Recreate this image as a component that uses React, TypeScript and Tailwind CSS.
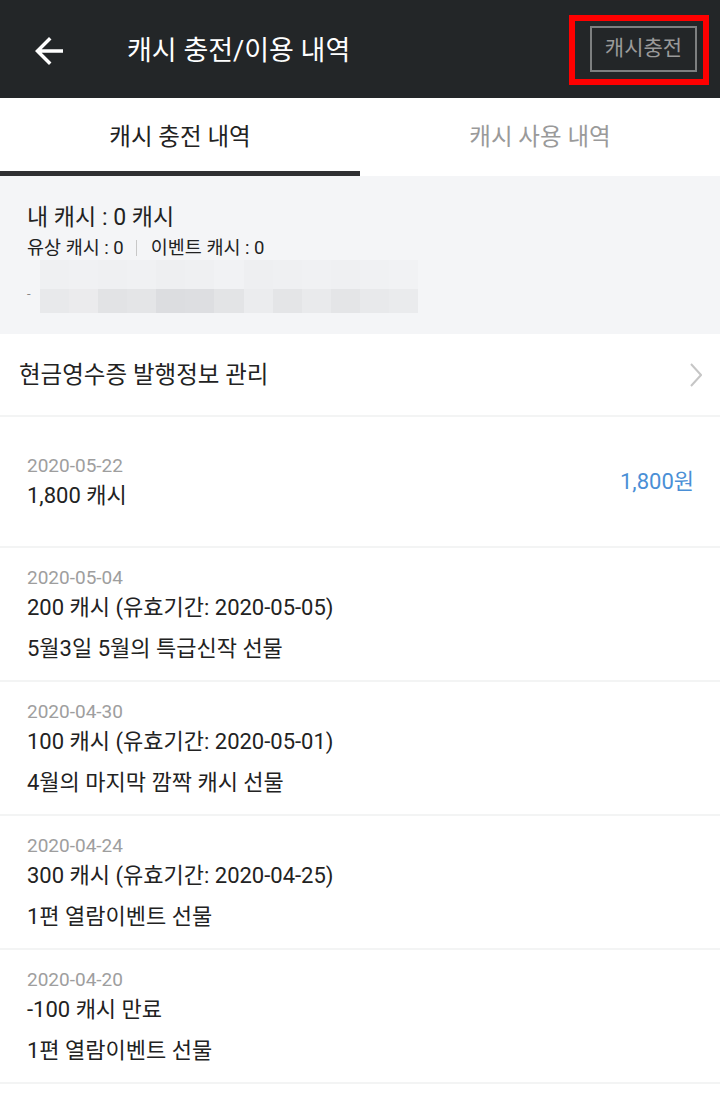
import React from "react";

type Entry = {
  date: string;
  title: string;
  memo?: string;
  amount?: string;
};

const entries: Entry[] = [
  { date: "2020-05-22", title: "1,800 캐시", amount: "1,800원" },
  { date: "2020-05-04", title: "200 캐시 (유효기간: 2020-05-05)", memo: "5월3일 5월의 특급신작 선물" },
  { date: "2020-04-30", title: "100 캐시 (유효기간: 2020-05-01)", memo: "4월의 마지막 깜짝 캐시 선물" },
  { date: "2020-04-24", title: "300 캐시 (유효기간: 2020-04-25)", memo: "1편 열람이벤트 선물" },
  { date: "2020-04-20", title: "-100 캐시 만료", memo: "1편 열람이벤트 선물" },
];

// mosaic shades of the blurred notice
const blurTop = [
  "bg-[#eff0f2]", "bg-[#f0f1f3]", "bg-[#eff0f2]", "bg-[#f0f1f3]", "bg-[#eeeff1]", "bg-[#eff0f2]", "bg-[#f1f2f4]",
  "bg-[#eeeff1]", "bg-[#eff0f2]", "bg-[#f0f1f3]", "bg-[#eff0f2]", "bg-[#f0f1f3]", "bg-[#f1f2f4]",
];
const blurBottom = [
  "bg-[#e8e9eb]", "bg-[#ebebed]", "bg-[#e2e3e5]", "bg-[#e4e5e7]", "bg-[#dcdde0]", "bg-[#dddee1]", "bg-[#e3e4e6]",
  "bg-[#ebecee]", "bg-[#e4e5e7]", "bg-[#e9eaec]", "bg-[#e4e5e7]", "bg-[#e8e9eb]", "bg-[#eaebed]",
];

function Header() {
  return (
    <header className="flex h-[98px] items-center bg-[#232628] pt-[4px]">
      <svg viewBox="0 0 24 24" className="ml-[28px] size-[42px] fill-white" aria-hidden>
        <path d="M20 11H7.83l5.59-5.59L12 4l-8 8 8 8 1.41-1.41L7.83 13H20v-2z" />
      </svg>
      <h1 className="ml-[57px] text-[27px] leading-none text-white">캐시 충전/이용 내역</h1>
      <div className="relative ml-auto mr-[23px] -mt-[4px]">
        <button className="flex h-[46px] w-[107px] items-center justify-center border-2 border-[#7d7f80] text-[21px] text-[#9a9a9a]">
          캐시충전
        </button>
        <span className="pointer-events-none absolute -bottom-[13px] -left-[21px] -right-[12px] -top-[11px] border-[6px] border-[#ff0000]" />
      </div>
    </header>
  );
}

function Tabs() {
  return (
    <nav className="flex h-[78px] bg-white">
      <div className="relative flex flex-1 items-center justify-center pt-[1px] text-[23.5px] text-[#222]">
        캐시 충전 내역
        <span className="absolute bottom-0 left-0 right-0 h-[5px] bg-[#2f3032]" />
      </div>
      <div className="flex flex-1 items-center justify-center pt-[1px] text-[23.5px] text-[#9a9a9a]">캐시 사용 내역</div>
    </nav>
  );
}

function Balance() {
  return (
    <section className="h-[158px] bg-[#f4f5f7] px-[27px] pt-[27px]">
      <p className="text-[23px] leading-[30px] text-[#222]">내 캐시 : 0 캐시</p>
      <p className="mt-[3px] flex items-center text-[18.5px] leading-[24px] text-[#222]">
        유상 캐시 : 0
        <span className="ml-[12px] mr-[14px] h-[16px] w-px bg-[#c8c8c8]" />
        이벤트 캐시 : 0
      </p>
      <div className="flex items-end">
        <span className="mb-[13px] w-[13px] text-[13px] leading-none text-[#888]">-</span>
        <div className="grid w-[378px] grid-cols-13">
          {blurTop.map((c, i) => (
            <span key={"t" + i} className={"h-[29px] " + c} />
          ))}
          {blurBottom.map((c, i) => (
            <span key={"b" + i} className={"h-[24px] " + c} />
          ))}
        </div>
      </div>
    </section>
  );
}

function ReceiptRow() {
  return (
    <div className="flex h-[83px] items-center justify-between border-b-2 border-[#f3f4f4] pl-[19px] pr-[18px] pt-[3px]">
      <span className="text-[23.5px] text-[#222]">현금영수증 발행정보 관리</span>
      <svg width="12" height="24" viewBox="0 0 12 24" fill="none" className="-mt-[3px]" aria-hidden>
        <polyline points="1,1 11,12 1,23" stroke="#c6c6c6" strokeWidth="2" />
      </svg>
    </div>
  );
}

function EntryRow({ entry }: { entry: Entry }) {
  if (entry.amount) {
    return (
      <li className="flex h-[131px] items-center justify-between border-b-2 border-[#f3f4f4] pl-[27px] pr-[26px]">
        <div className="pt-[1px]">
          <p className="text-[19px] leading-[24px] text-[#9e9e9e]">{entry.date}</p>
          <p className="mt-[3px] text-[22px] leading-[30px] text-[#222]">{entry.title}</p>
        </div>
        <span className="text-[22px] text-[#4a8fd6]">{entry.amount}</span>
      </li>
    );
  }
  return (
    <li className="h-[134px] border-b-2 border-[#f3f4f4] px-[27px] pt-[18px]">
      <p className="text-[19px] leading-[24px] text-[#9e9e9e]">{entry.date}</p>
      <p className="mt-[3px] text-[22px] leading-[30px] text-[#222]">{entry.title}</p>
      <p className="mt-[11px] text-[22px] leading-[30px] text-[#222]">{entry.memo}</p>
    </li>
  );
}

export default function App() {
  return (
    <div className="min-h-[1096px] w-[720px] bg-white font-['Roboto','Noto_Sans_CJK_KR',sans-serif]">
      <Header />
      <Tabs />
      <Balance />
      <ReceiptRow />
      <ul>
        {entries.map((e) => (
          <EntryRow key={e.date} entry={e} />
        ))}
      </ul>
    </div>
  );
}
